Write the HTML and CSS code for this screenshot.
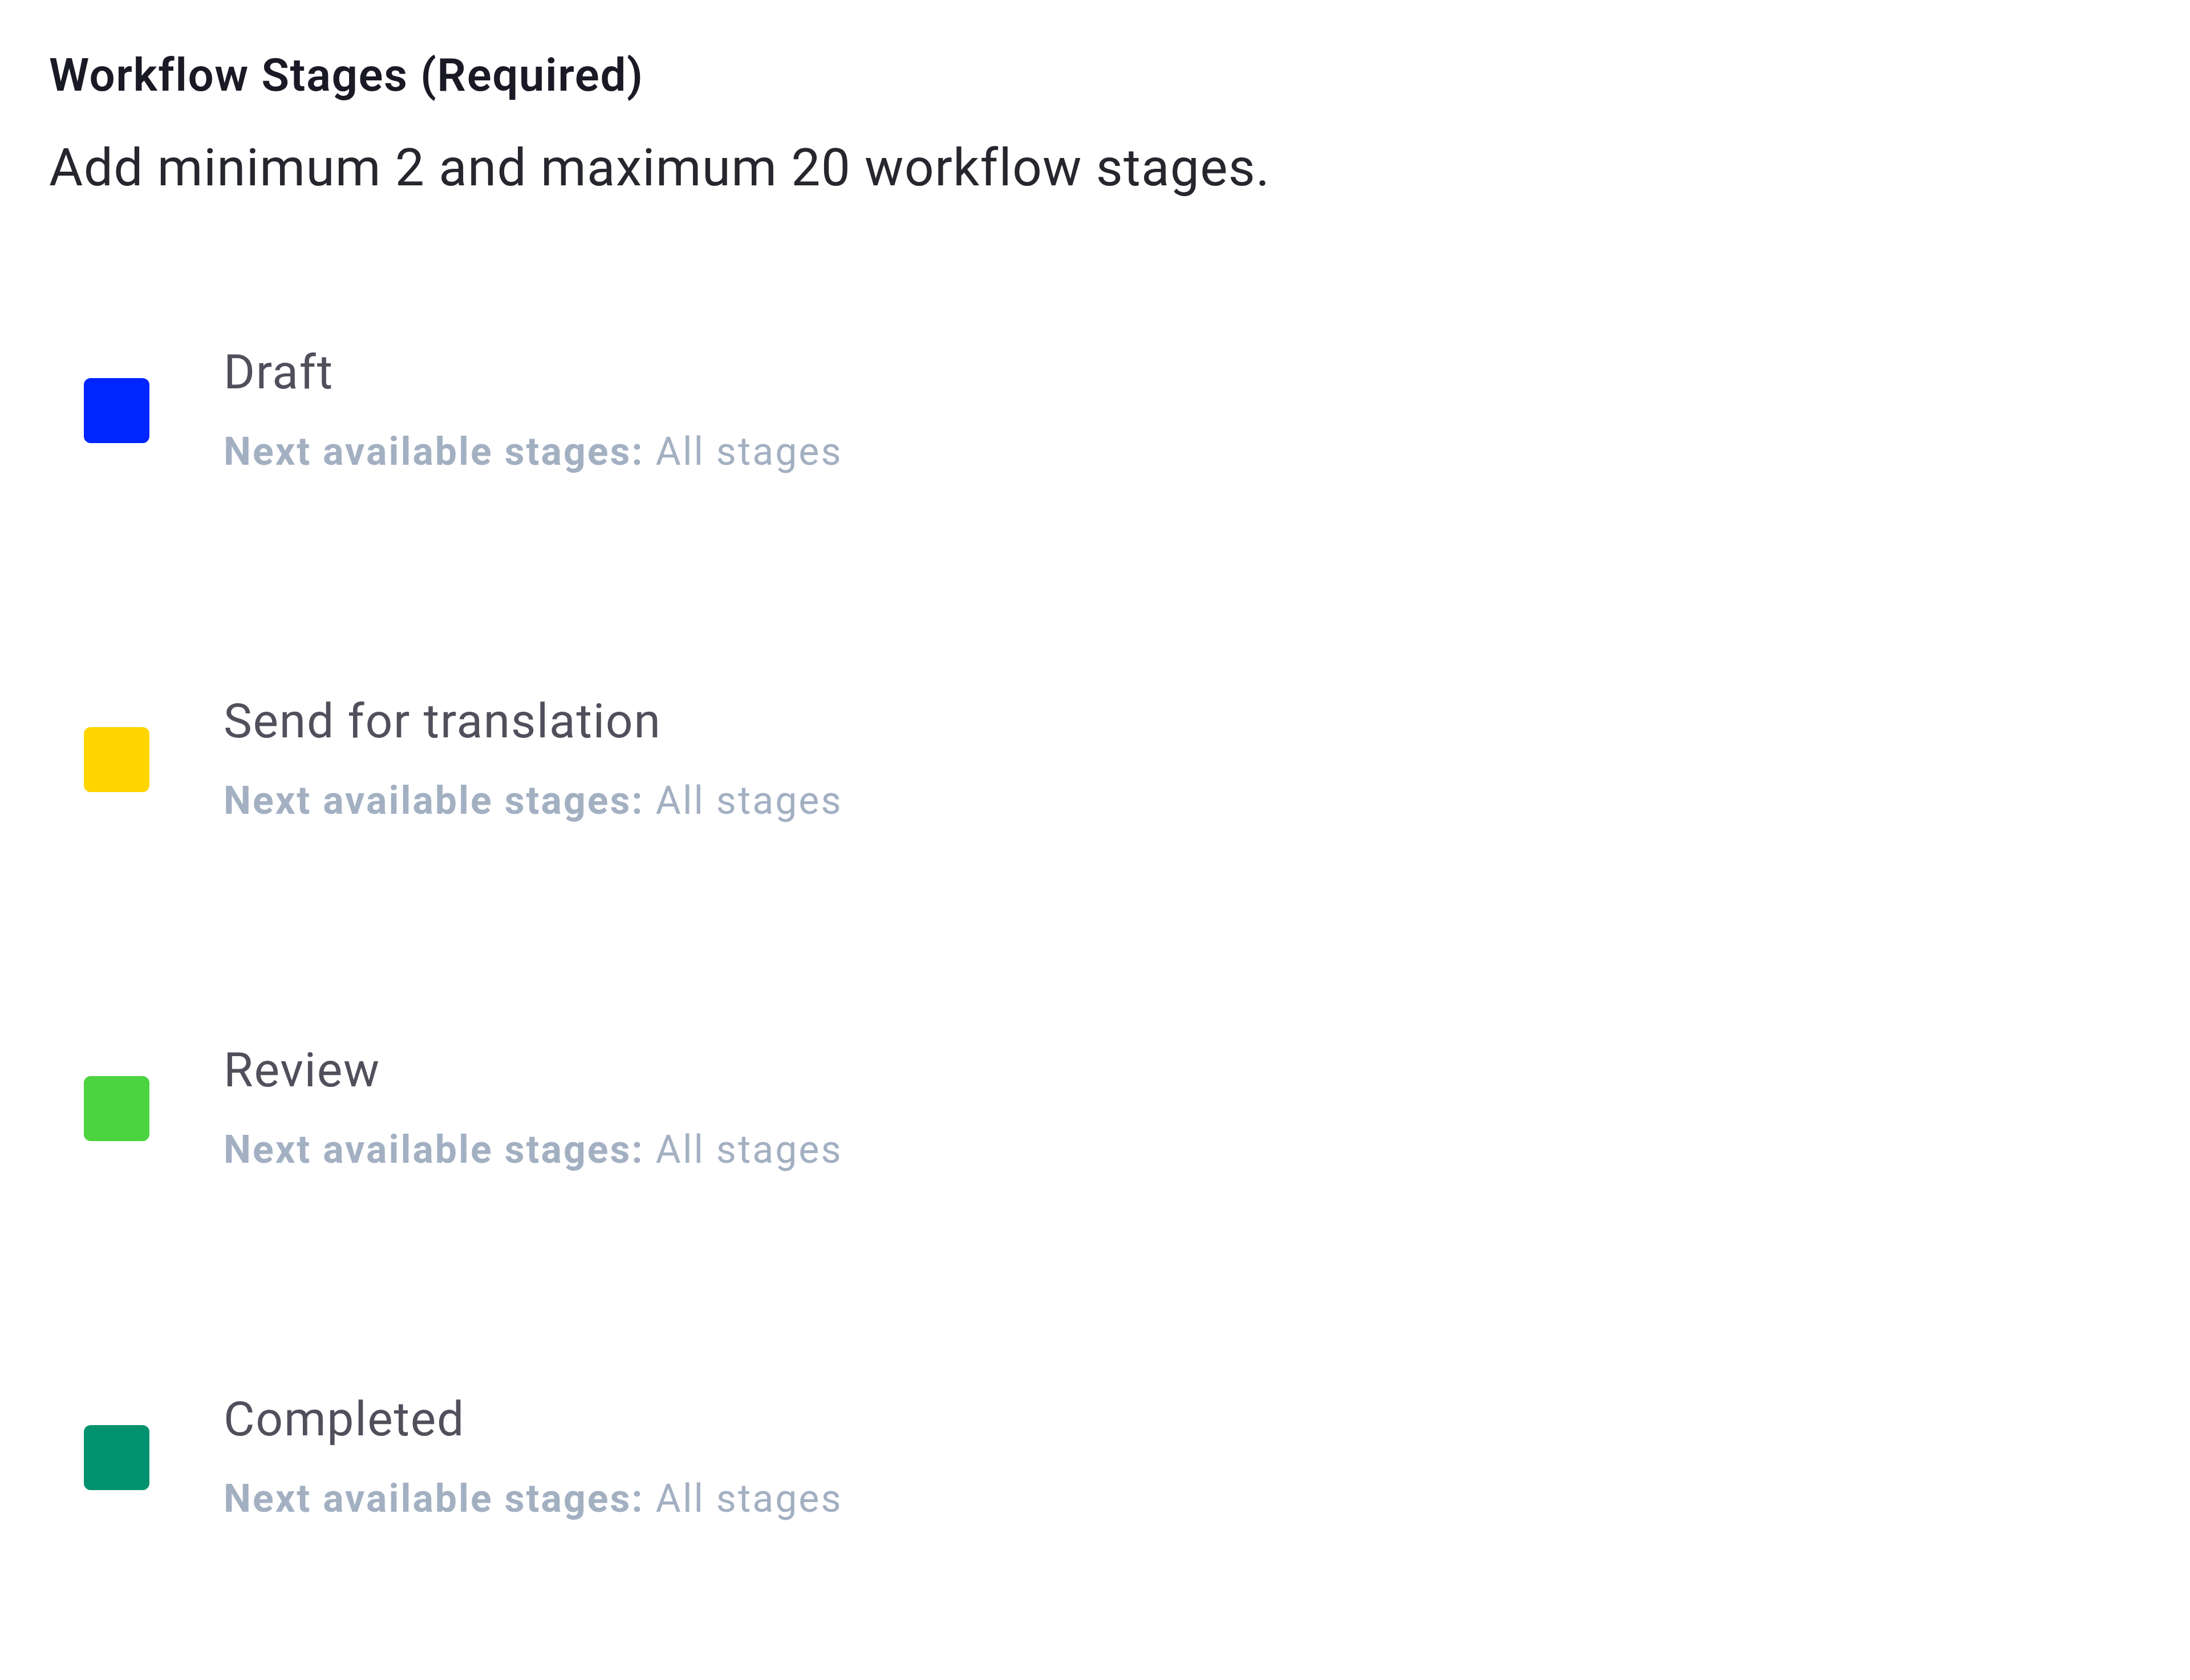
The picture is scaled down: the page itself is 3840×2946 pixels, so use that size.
FILE: index.html
```html
<!DOCTYPE html>
<html lang="en">
<head>
    <meta charset="UTF-8">
    <meta name="viewport" content="width=device-width, initial-scale=1.0">
    <title>Workflow Stages</title>
    <link rel="stylesheet" href="styles.css">
</head>
<body>
    <div class="container">
        <h2 class="field-label">Workflow Stages (Required)</h2>
        <p class="field-hint">Add minimum 2 and maximum 20 workflow stages.</p>

        <ul class="stage-list">
            <li class="stage">
                <span class="stage-color color-blue"></span>
                <div class="stage-info">
                    <div class="stage-name">Draft</div>
                    <div class="stage-next"><b>Next available stages:</b> All stages</div>
                </div>
            </li>
            <li class="stage">
                <span class="stage-color color-yellow"></span>
                <div class="stage-info">
                    <div class="stage-name">Send for translation</div>
                    <div class="stage-next"><b>Next available stages:</b> All stages</div>
                </div>
            </li>
            <li class="stage">
                <span class="stage-color color-green"></span>
                <div class="stage-info">
                    <div class="stage-name">Review</div>
                    <div class="stage-next"><b>Next available stages:</b> All stages</div>
                </div>
            </li>
            <li class="stage">
                <span class="stage-color color-teal"></span>
                <div class="stage-info">
                    <div class="stage-name">Completed</div>
                    <div class="stage-next"><b>Next available stages:</b> All stages</div>
                </div>
            </li>
        </ul>
    </div>
</body>
</html>
```

FILE: styles.css
```css
body {
    font-family: Roboto, "Liberation Sans", sans-serif;
    margin: 0;
    background: #fff;
}
.container {
    padding: 82px 0 0 86px;
}
.field-label {
    font-size: 80px;
    line-height: 100px;
    font-weight: 600;
    letter-spacing: 1.5px;
    color: #1a1a26;
    margin: 0;
}
.field-hint {
    font-size: 91px;
    line-height: 120px;
    letter-spacing: 1.3px;
    color: #26262e;
    margin: 52px 0 0;
}
.stage-list {
    list-style: none;
    margin: 60px 0 0;
    padding: 0;
}
.stage {
    display: flex;
    align-items: center;
    padding: 189px 0;
}
.stage-color {
    width: 115px;
    height: 114px;
    border-radius: 12px;
    margin-left: 61px;
    margin-right: 130px;
    flex-shrink: 0;
}
.color-blue { background: #0025ff; }
.color-yellow { background: #ffd500; }
.color-green { background: #4bd43f; }
.color-teal { background: #00926f; }
.stage-name {
    font-size: 84px;
    line-height: 100px;
    letter-spacing: 1.7px;
    color: #50505c;
}
.stage-next {
    font-size: 68px;
    line-height: 90px;
    letter-spacing: 3px;
    color: #a3b0c2;
    margin-top: 44px;
}
.stage-next b {
    font-weight: 700;
}
```
